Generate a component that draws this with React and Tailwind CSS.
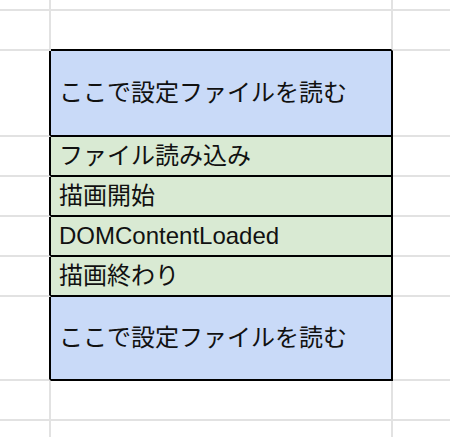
import React from 'react';

const rows = [
  { h: 'h-[11px]' },
  { h: 'h-[40px]', above: true },
  { h: 'h-[86px]', text: 'ここで設定ファイルを読む', bg: 'bg-[#c9daf8]' },
  { h: 'h-[40px]', text: 'ファイル読み込み', bg: 'bg-[#d9ead3]' },
  { h: 'h-[40px]', text: '描画開始', bg: 'bg-[#d9ead3]' },
  { h: 'h-[40px]', text: 'DOMContentLoaded', bg: 'bg-[#d9ead3]' },
  { h: 'h-[40px]', text: '描画終わり', bg: 'bg-[#d9ead3]' },
  { h: 'h-[84px]', text: 'ここで設定ファイルを読む', bg: 'bg-[#c9daf8]' },
  { h: 'h-[40px]' },
  { h: 'h-[40px]' },
];

const App = () => {
  return (
    <div
      className="w-[450px] h-[437px] overflow-hidden bg-white"
      style={{ fontFamily: '"Liberation Sans", "Noto Sans CJK JP", sans-serif' }}
    >
      {rows.map((row, i) => {
        const inBox = !!row.text;
        return (
          <div key={i} className={`flex ${row.h}`}>
            {/* left column */}
            <div
              className={`w-[51px] shrink-0 border-b-2 border-r-2 border-b-[#e2e2e2] ${
                inBox ? 'border-r-black' : 'border-r-[#e2e2e2]'
              }`}
            />
            {/* middle column */}
            <div
              className={`w-[342px] shrink-0 border-b-2 border-r-2 flex items-center pl-2 text-[24px] leading-none text-[#111] ${
                inBox
                  ? `${row.bg} border-b-black border-r-black`
                  : row.above
                  ? 'border-b-black border-r-[#e2e2e2]'
                  : 'border-b-[#e2e2e2] border-r-[#e2e2e2]'
              }`}
            >
              {row.text}
            </div>
            {/* right column */}
            <div className="flex-1 border-b-2 border-b-[#e2e2e2]" />
          </div>
        );
      })}
    </div>
  );
};

export default App;
